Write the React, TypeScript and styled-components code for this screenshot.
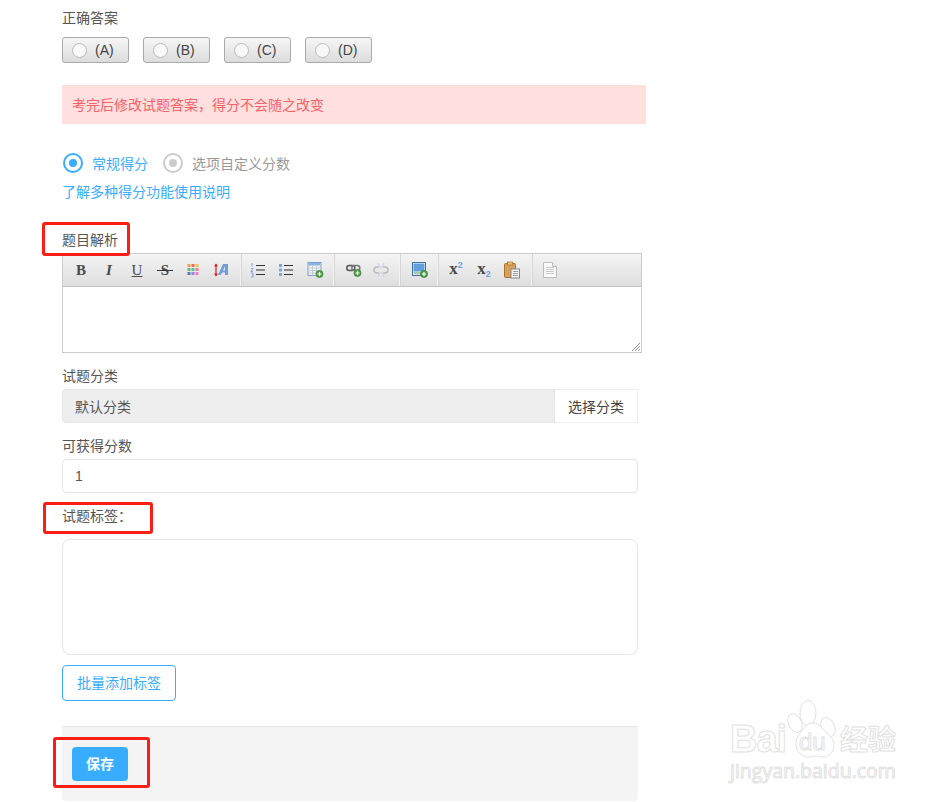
import React, { ReactElement, ReactNode } from 'react';
import styled, { createGlobalStyle } from 'styled-components';

const CJK = `"Liberation Sans", "Noto Sans CJK SC", sans-serif`;

const GlobalStyle = createGlobalStyle`
  html, body {
    margin: 0;
    padding: 0;
    background: #fff;
    font-family: ${CJK};
    font-size: 14px;
    color: #555;
  }
`;

const Page = styled.div`
  position: relative;
  width: 951px;
  height: 802px;
  overflow: hidden;
  padding: 8px 0 0 62px;
  box-sizing: border-box;
`;

const Label = styled.div<{ $mt?: number }>`
  height: 20px;
  line-height: 20px;
  margin-top: ${(p) => p.$mt ?? 0}px;
  color: #555;
`;

const AnswerRow = styled.div`
  display: flex;
  gap: 14px;
  margin-top: 9px;
`;

const AnswerButton = styled.div`
  width: 67px;
  height: 26px;
  box-sizing: border-box;
  border: 1px solid #aaa;
  border-radius: 3px;
  background: linear-gradient(#f6f6f6, #dcdcdc);
  display: flex;
  align-items: center;
  padding-left: 9px;
  gap: 8px;
  color: #444;
  font-size: 14px;
`;

const AnswerDot = styled.span`
  width: 15px;
  height: 15px;
  box-sizing: border-box;
  border-radius: 50%;
  border: 1px solid #bbb;
  background: #f8f8f8;
`;

const Alert = styled.div`
  width: 584px;
  height: 39px;
  margin-top: 22px;
  padding-left: 10px;
  box-sizing: border-box;
  background: #ffe0de;
  color: #f9606a;
  line-height: 40px;
  font-size: 14px;
`;

const ScoreRow = styled.div`
  display: flex;
  align-items: center;
  margin-top: 29px;
  padding-left: 1px;
  height: 21px;
  line-height: 20px;
`;

const Radio = styled.span<{ $on?: boolean }>`
  width: 20px;
  height: 20px;
  margin-top: -1px;
  box-sizing: border-box;
  border-radius: 50%;
  border: 2px solid ${(p) => (p.$on ? '#38adff' : '#ccc')};
  display: flex;
  align-items: center;
  justify-content: center;
  &::after {
    content: '';
    width: 8px;
    height: 8px;
    border-radius: 50%;
    background: ${(p) => (p.$on ? '#38adff' : '#ccc')};
  }
`;

const RadioText = styled.span<{ $on?: boolean }>`
  margin: 0 ${(p) => (p.$on ? 15 : 0)}px 0 9px;
  color: ${(p) => (p.$on ? '#38adff' : '#999')};
`;

const HelpLink = styled.a`
  display: block;
  margin-top: 8px;
  height: 20px;
  line-height: 20px;
  color: #38adff;
`;

const Editor = styled.div`
  width: 580px;
  height: 100px;
  box-sizing: border-box;
  margin-top: 3px;
  border: 1px solid #ccc;
  position: relative;
`;

const Toolbar = styled.div`
  display: flex;
  height: 33px;
  box-sizing: border-box;
  border-bottom: 1px solid #c4c4c4;
  background: linear-gradient(#f4f4f4, #dedede);
`;

const ToolGroup = styled.div<{ $pl: number; $pr: number; $last?: boolean }>`
  display: flex;
  padding: 0 ${(p) => p.$pr}px 0 ${(p) => p.$pl}px;
  border-right: ${(p) => (p.$last ? 'none' : '1px solid #f2f2f2')};
  box-shadow: ${(p) => (p.$last ? 'none' : '1px 0 0 #d6d6d6')};
`;

const ToolButton = styled.div`
  width: 28px;
  height: 32px;
  display: flex;
  align-items: center;
  justify-content: center;
`;

const Glyph = styled.span<{ $size?: number }>`
  font-family: "Liberation Serif", serif;
  font-weight: 700;
  font-size: ${(p) => p.$size ?? 15}px;
  line-height: 18px;
  color: #4a4a4a;
`;

const GlyphItalic = styled(Glyph)`
  font-style: italic;
`;

const GlyphUnder = styled(Glyph)`
  font-weight: 400;
  text-decoration: underline;
`;

const GlyphStrike = styled(Glyph)`
  position: relative;
  &::after {
    content: '';
    position: absolute;
    left: -4px;
    right: -4px;
    top: 9px;
    height: 1px;
    background: #333;
  }
`;

const Script = styled.span<{ $low?: boolean }>`
  font-family: "Liberation Sans", sans-serif;
  font-weight: 700;
  font-size: 9px;
  color: #6f9fe6;
  position: relative;
  top: ${(p) => (p.$low ? '3px' : '-6px')};
`;

const Grip = styled.svg`
  position: absolute;
  right: 1px;
  bottom: 1px;
`;

const IconSvg = styled.svg`
  overflow: visible;
`;

const InputGroup = styled.div`
  display: flex;
  width: 576px;
  height: 34px;
  margin-top: 3px;
`;

const ReadonlyField = styled.div`
  flex: 1;
  box-sizing: border-box;
  background: #eee;
  border: 1px solid #e6e6e6;
  border-radius: 4px 0 0 4px;
  padding-left: 12px;
  line-height: 35px;
  color: #555;
`;

const AddonButton = styled.div`
  width: 83px;
  box-sizing: border-box;
  border: 1px solid #eee;
  border-left: none;
  text-align: center;
  line-height: 35px;
  color: #444;
`;

const TextField = styled.div`
  width: 576px;
  height: 34px;
  box-sizing: border-box;
  margin-top: 3px;
  border: 1px solid #e6e6e6;
  border-radius: 4px;
  padding-left: 12px;
  line-height: 33px;
  color: #555;
`;

const TagArea = styled.div`
  width: 576px;
  height: 116px;
  box-sizing: border-box;
  margin-top: 13px;
  border: 1px solid #e6e6e6;
  border-radius: 8px;
`;

const OutlineButton = styled.div`
  width: 114px;
  height: 36px;
  box-sizing: border-box;
  margin-top: 10px;
  border: 1px solid #38adff;
  border-radius: 4px;
  color: #38adff;
  text-align: center;
  line-height: 35px;
`;

const Footer = styled.div`
  width: 576px;
  height: 75px;
  box-sizing: border-box;
  margin-top: 25px;
  padding: 20px 0 0 10px;
  background: #f4f4f4;
  border-top: 1px solid #e6e6e6;
  border-radius: 0 0 4px 4px;
`;

const SaveButton = styled.div`
  width: 56px;
  height: 34px;
  border-radius: 4px;
  background: #38adff;
  color: #fff;
  text-align: center;
  line-height: 35px;
  font-weight: 700;
`;

const Mark = styled.div<{ $x: number; $y: number; $w: number; $h: number }>`
  position: absolute;
  left: ${(p) => p.$x}px;
  top: ${(p) => p.$y}px;
  width: ${(p) => p.$w}px;
  height: ${(p) => p.$h}px;
  box-sizing: border-box;
  border: 3px solid #fa1e14;
  border-radius: 3px;
`;

const Watermark = styled.div`
  position: absolute;
  left: 730px;
  top: 700px;
  width: 172px;
  height: 84px;
  color: #fff;
  -webkit-text-stroke: 1px #e2e2e2;
`;

const WmBai = styled.span`
  position: absolute;
  left: 0;
  top: 18px;
  font: 700 38px/42px "Liberation Sans", sans-serif;
  letter-spacing: -1px;
`;

const WmJing = styled.span`
  position: absolute;
  left: 110px;
  top: 22px;
  font: 700 28px/32px "Noto Sans CJK SC", sans-serif;
`;

const WmUrl = styled.span`
  position: absolute;
  left: 0;
  top: 58px;
  font: 400 19.5px/26px "Open Sans", sans-serif;
`;

const WmPaw = styled.svg`
  position: absolute;
  left: 54px;
  top: 0;
`;

const WmDu = styled.span`
  position: absolute;
  left: 69px;
  top: 30px;
  font: 400 24px/24px "Liberation Sans", sans-serif;
`;

const Plus = ({ x = 11, y = 11 }: { x?: number; y?: number }): ReactElement => (
  <g>
    <circle cx={x} cy={y} r="3.6" fill="#4d9e46" stroke="#3b7f36" strokeWidth="0.6" />
    <path d={`M${x - 2} ${y}h4M${x} ${y - 2}v4`} stroke="#fff" strokeWidth="1.2" />
  </g>
);

const Icon = ({ children, dx = 0 }: { children: ReactNode; dx?: number }): ReactElement => (
  <IconSvg width="16" height="16" viewBox={`${-dx} 0 16 16`}>{children}</IconSvg>
);

const PaletteIcon = (): ReactElement => {
  const colors = ['#e8a04a', '#e86a5a', '#e8c44a', '#6fb86f', '#58c0a8', '#f08080', '#4f7fc0', '#a080d0', '#e880c8'];
  return (
    <Icon>
      {colors.map((c, i) => (
        <rect key={c} x={2.5 + (i % 3) * 4} y={2 + Math.floor(i / 3) * 4} width="3" height="3" fill={c} />
      ))}
    </Icon>
  );
};

const FontSizeIcon = (): ReactElement => (
  <Icon>
    <path d="M3 2v12" stroke="#d22" strokeWidth="1.2" />
    <path d="M1 4.500L3 1.500 5 4.500zM1 11.500L3 14.500 5 11.500z" fill="#d22" />
    <path d="M5 13L10 2h5v11h-3v-2.500H9L7.800 13z" fill="#6f9fd8" />
    <path d="M10 8.500h2V4z" fill="#dfe8f2" />
  </Icon>
);

const OrderedIcon = (): ReactElement => (
  <Icon>
    <path d="M2 1v3.500M1 6.500h2l-2 3h2M1 11h2v4H1M2 13h1" stroke="#7aa7dc" strokeWidth="1" fill="none" />
    <path d="M6 3.500h9M6 8h9M6 12.500h9" stroke="#333" strokeWidth="1.2" />
  </Icon>
);

const BulletIcon = (): ReactElement => (
  <Icon>
    <rect x="1" y="2" width="3" height="3" fill="#7aa7dc" />
    <rect x="1" y="6.500" width="3" height="3" fill="#7aa7dc" />
    <rect x="1" y="11" width="3" height="3" fill="#7aa7dc" />
    <path d="M6 3.500h9M6 8h9M6 12.500h9" stroke="#333" strokeWidth="1.2" />
  </Icon>
);

const TableIcon = (): ReactElement => (
  <Icon dx={1.5}>
    <rect x="0.500" y="0.500" width="13" height="13" fill="#f4f4ea" stroke="#7b9ed0" />
    <rect x="1" y="1" width="12" height="2.500" fill="#8fb2e0" />
    <path d="M1 6h12M1 8.500h12M1 11h12M5 3.500v10M9 3.500v10" stroke="#b8c4d4" strokeWidth="0.8" />
    <Plus x={12} y={12} />
  </Icon>
);

const LinkIcon = (): ReactElement => (
  <Icon dx={1}>
    <rect x="0.800" y="3.500" width="8" height="5" rx="2.500" fill="none" stroke="#555" strokeWidth="1.500" />
    <rect x="5.800" y="3.500" width="8" height="5" rx="2.500" fill="none" stroke="#777" strokeWidth="1.500" />
    <Plus x={11.500} y={11} />
  </Icon>
);

const UnlinkIcon = (): ReactElement => (
  <Icon>
    <path d="M6 5H4a3 3 0 0 0 0 6h2M10 5h2a3 3 0 0 1 0 6h-2" fill="none" stroke="#bbb" strokeWidth="1.500" />
    <path d="M5 1l2.500 5M11 1L8.500 6M5 15l2.500-5M11 15l-2.500-5" stroke="#c4d0e0" strokeWidth="1" />
  </Icon>
);

const ImageIcon = (): ReactElement => (
  <Icon dx={1}>
    <rect x="0.500" y="0.500" width="13" height="13" fill="#fff" stroke="#3d6fa8" />
    <rect x="1.500" y="1.500" width="11" height="8" fill="#5f9fdc" />
    <rect x="1.500" y="9.500" width="11" height="3" fill="#a8c8b0" />
    <Plus x={12} y={12} />
  </Icon>
);

const PasteIcon = (): ReactElement => (
  <svg width="18" height="18" viewBox="0 0 18 18">
    <rect x="1.500" y="2.500" width="11" height="14" rx="1" fill="#d8a058" stroke="#a8702c" />
    <rect x="4.500" y="1" width="5" height="3" fill="#e8c070" stroke="#a8702c" strokeWidth="0.700" />
    <rect x="8" y="8" width="8.500" height="9" fill="#f4f4f4" stroke="#888" />
    <path d="M10 10.500h5M10 12.500h5M10 14.500h5" stroke="#888" strokeWidth="0.800" />
  </svg>
);

const DocIcon = (): ReactElement => (
  <Icon>
    <path d="M1.500 0.500h9l4 4v11h-13z" fill="#fafafa" stroke="#bdbdbd" />
    <path d="M10.500 0.500v4h4" fill="#eee" stroke="#bdbdbd" />
    <path d="M4 5.500h8M4 7.500h8M4 9.500h8M4 11.500h8" stroke="#c4c4c4" strokeWidth="0.900" />
  </Icon>
);

const App = (): ReactElement => (
  <Page>
    <GlobalStyle />
    <Label>正确答案</Label>
    <AnswerRow>
      {['(A)', '(B)', '(C)', '(D)'].map((answer) => (
        <AnswerButton key={answer}>
          <AnswerDot />
          {answer}
        </AnswerButton>
      ))}
    </AnswerRow>
    <Alert>考完后修改试题答案，得分不会随之改变</Alert>
    <ScoreRow>
      <Radio $on />
      <RadioText $on>常规得分</RadioText>
      <Radio />
      <RadioText>选项自定义分数</RadioText>
    </ScoreRow>
    <HelpLink>了解多种得分功能使用说明</HelpLink>
    <Label $mt={28}>题目解析</Label>
    <Editor>
      <Toolbar>
        <ToolGroup $pl={4} $pr={5}>
          <ToolButton><Glyph>B</Glyph></ToolButton>
          <ToolButton><GlyphItalic>I</GlyphItalic></ToolButton>
          <ToolButton><GlyphUnder>U</GlyphUnder></ToolButton>
          <ToolButton><GlyphStrike>S</GlyphStrike></ToolButton>
          <ToolButton><PaletteIcon /></ToolButton>
          <ToolButton><FontSizeIcon /></ToolButton>
        </ToolGroup>
        <ToolGroup $pl={3} $pr={5}>
          <ToolButton><OrderedIcon /></ToolButton>
          <ToolButton><BulletIcon /></ToolButton>
          <ToolButton><TableIcon /></ToolButton>
        </ToolGroup>
        <ToolGroup $pl={5} $pr={4}>
          <ToolButton><LinkIcon /></ToolButton>
          <ToolButton><UnlinkIcon /></ToolButton>
        </ToolGroup>
        <ToolGroup $pl={5} $pr={4}>
          <ToolButton><ImageIcon /></ToolButton>
        </ToolGroup>
        <ToolGroup $pl={4} $pr={5}>
          <ToolButton><Glyph $size={17}>x<Script>2</Script></Glyph></ToolButton>
          <ToolButton><Glyph $size={17}>x<Script $low>2</Script></Glyph></ToolButton>
          <ToolButton><PasteIcon /></ToolButton>
        </ToolGroup>
        <ToolGroup $pl={4} $pr={0} $last>
          <ToolButton><DocIcon /></ToolButton>
        </ToolGroup>
      </Toolbar>
      <Grip width="8" height="8" viewBox="0 0 8 8">
        <path d="M0 8L8 0M3 8l5-5M6 8l2-2" stroke="#777" strokeWidth="0.800" />
      </Grip>
    </Editor>
    <Label $mt={13}>试题分类</Label>
    <InputGroup>
      <ReadonlyField>默认分类</ReadonlyField>
      <AddonButton>选择分类</AddonButton>
    </InputGroup>
    <Label $mt={13}>可获得分数</Label>
    <TextField>1</TextField>
    <Label $mt={13}>试题标签：</Label>
    <TagArea />
    <OutlineButton>批量添加标签</OutlineButton>
    <Footer>
      <SaveButton>保存</SaveButton>
    </Footer>

    <Mark $x={42} $y={222} $w={88} $h={34} />
    <Mark $x={43} $y={502} $w={110} $h={32} />
    <Mark $x={53} $y={737} $w={97} $h={51} />

    <Watermark>
      <WmBai>Bai</WmBai>
      <WmPaw width="56" height="58" viewBox="0 0 56 58" fill="#fff" stroke="#e2e2e2">
        <ellipse cx="24" cy="13" rx="8" ry="12.500" />
        <ellipse cx="11" cy="23" rx="6.500" ry="10" transform="rotate(-25 11 23)" />
        <ellipse cx="44" cy="27" rx="6.500" ry="10" transform="rotate(-25 44 27)" />
        <path d="M29 23c-6 0-9 5-12 9-4 5-5 8-5 12 0 8 6 13 13 13 3 0 5-1 7-1s4 1 7 1c6 0 11-5 11-12 0-5-4-9-8-13-4-4-7-9-13-9z" />
      </WmPaw>
      <WmDu>du</WmDu>
      <WmJing>经验</WmJing>
      <WmUrl>jingyan.baidu.com</WmUrl>
    </Watermark>
  </Page>
);

export default App;
